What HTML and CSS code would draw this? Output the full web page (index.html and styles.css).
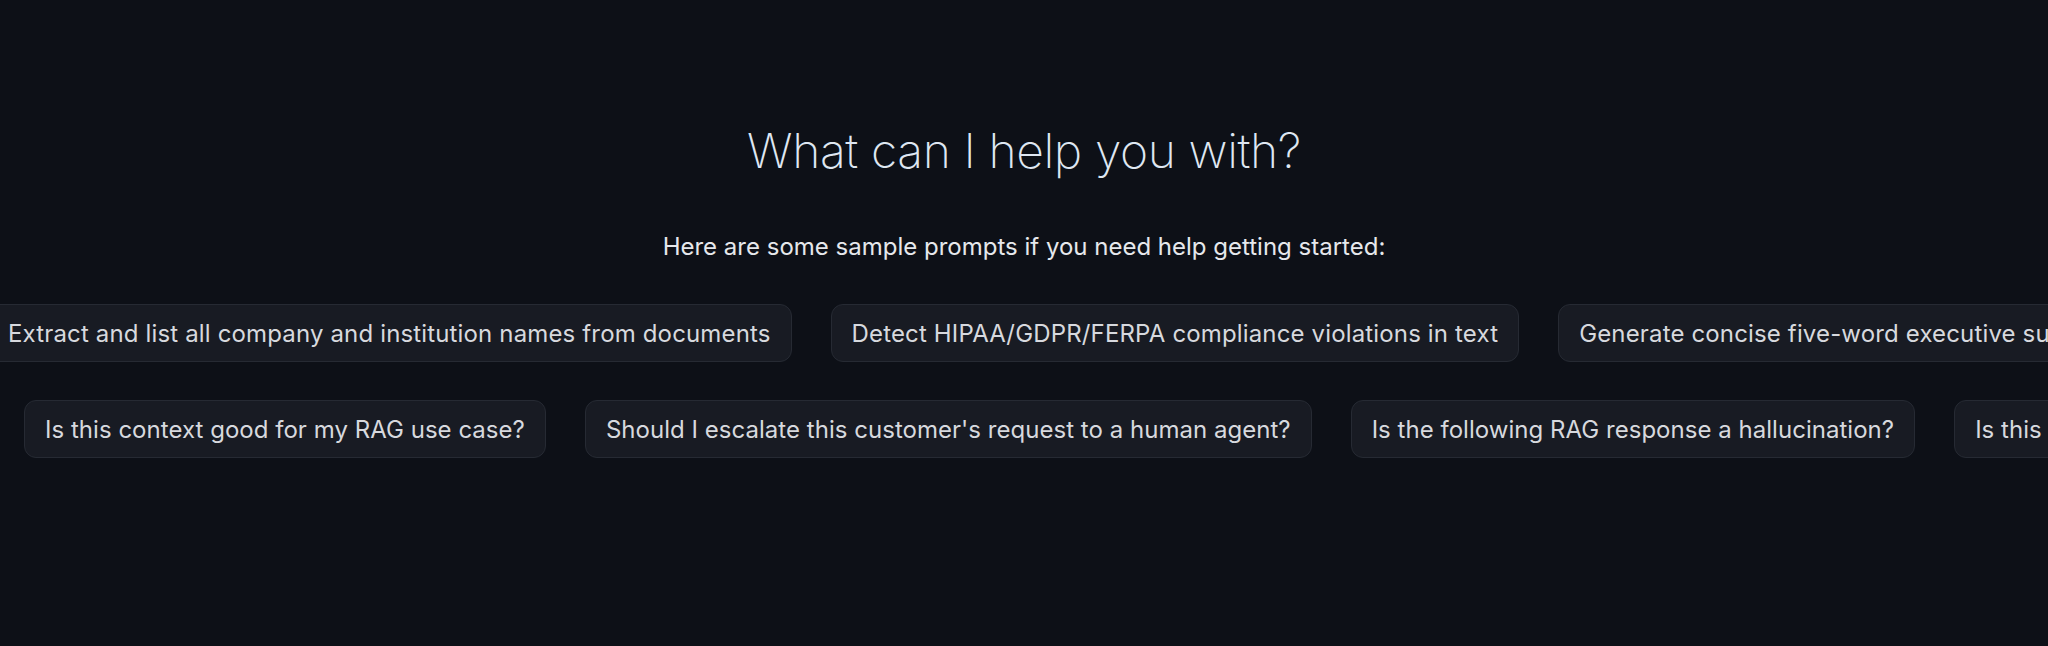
FILE: index.html
```html
<!DOCTYPE html>
<html lang="en">
<head>
<meta charset="utf-8">
<title>What can I help you with?</title>
<link rel="stylesheet" href="styles.css">
</head>
<body>
<main class="welcome">
  <h1 class="title">What can I help you with?</h1>
  <p class="subtitle">Here are some sample prompts if you need help getting started:</p>
  <div class="prompts">
    <div class="row row-one">
      <button class="chip">Extract and list all company and institution names from documents</button>
      <button class="chip">Detect HIPAA/GDPR/FERPA compliance violations in text</button>
      <button class="chip">Generate concise five-word executive summaries of documents</button>
      <button class="chip">Classify the sentiment of this customer review</button>
    </div>
    <div class="row row-two">
      <button class="chip">Is this context good for my RAG use case?</button>
      <button class="chip">Should I escalate this customer's request to a human agent?</button>
      <button class="chip">Is the following RAG response a hallucination?</button>
      <button class="chip">Is this response toxic or harmful?</button>
    </div>
  </div>
</main>
</body>
</html>
```

FILE: styles.css
```css
html, body {
  margin: 0;
  padding: 0;
  background: #0d1017;
  height: 100%;
  overflow: hidden;
}

body {
  font-family: Inter, "Liberation Sans", sans-serif;
  color: #e4e7ec;
}

.welcome {
  display: flex;
  flex-direction: column;
  align-items: center;
  padding-top: 122px;
}

.title {
  margin: 0;
  font-size: 48px;
  line-height: 58px;
  font-weight: 200;
  color: #dfe7f2;
  letter-spacing: -0.4px;
}

.subtitle {
  margin: 51px 0 0;
  font-size: 24px;
  line-height: 32px;
  font-weight: 400;
  color: #e6e8ec;
}

.prompts {
  align-self: stretch;
  display: flex;
  flex-direction: column;
  gap: 38px;
  margin-top: 41px;
  overflow: hidden;
}

.row {
  display: flex;
  gap: 39px;
  white-space: nowrap;
}

.row-one {
  margin-left: -13px;
}

.row-one .chip {
  letter-spacing: 0.15px;
}

.row-two {
  margin-left: 24px;
}

.row-two .chip {
  letter-spacing: 0.03px;
}

.chip {
  flex: none;
  box-sizing: border-box;
  height: 58px;
  padding: 0 20px;
  display: flex;
  align-items: center;
  background: #181b23;
  border: 1px solid #262a33;
  border-radius: 12px;
  font-family: inherit;
  font-size: 24px;
  font-weight: 400;
  color: #d7d9de;
  cursor: pointer;
}
```
